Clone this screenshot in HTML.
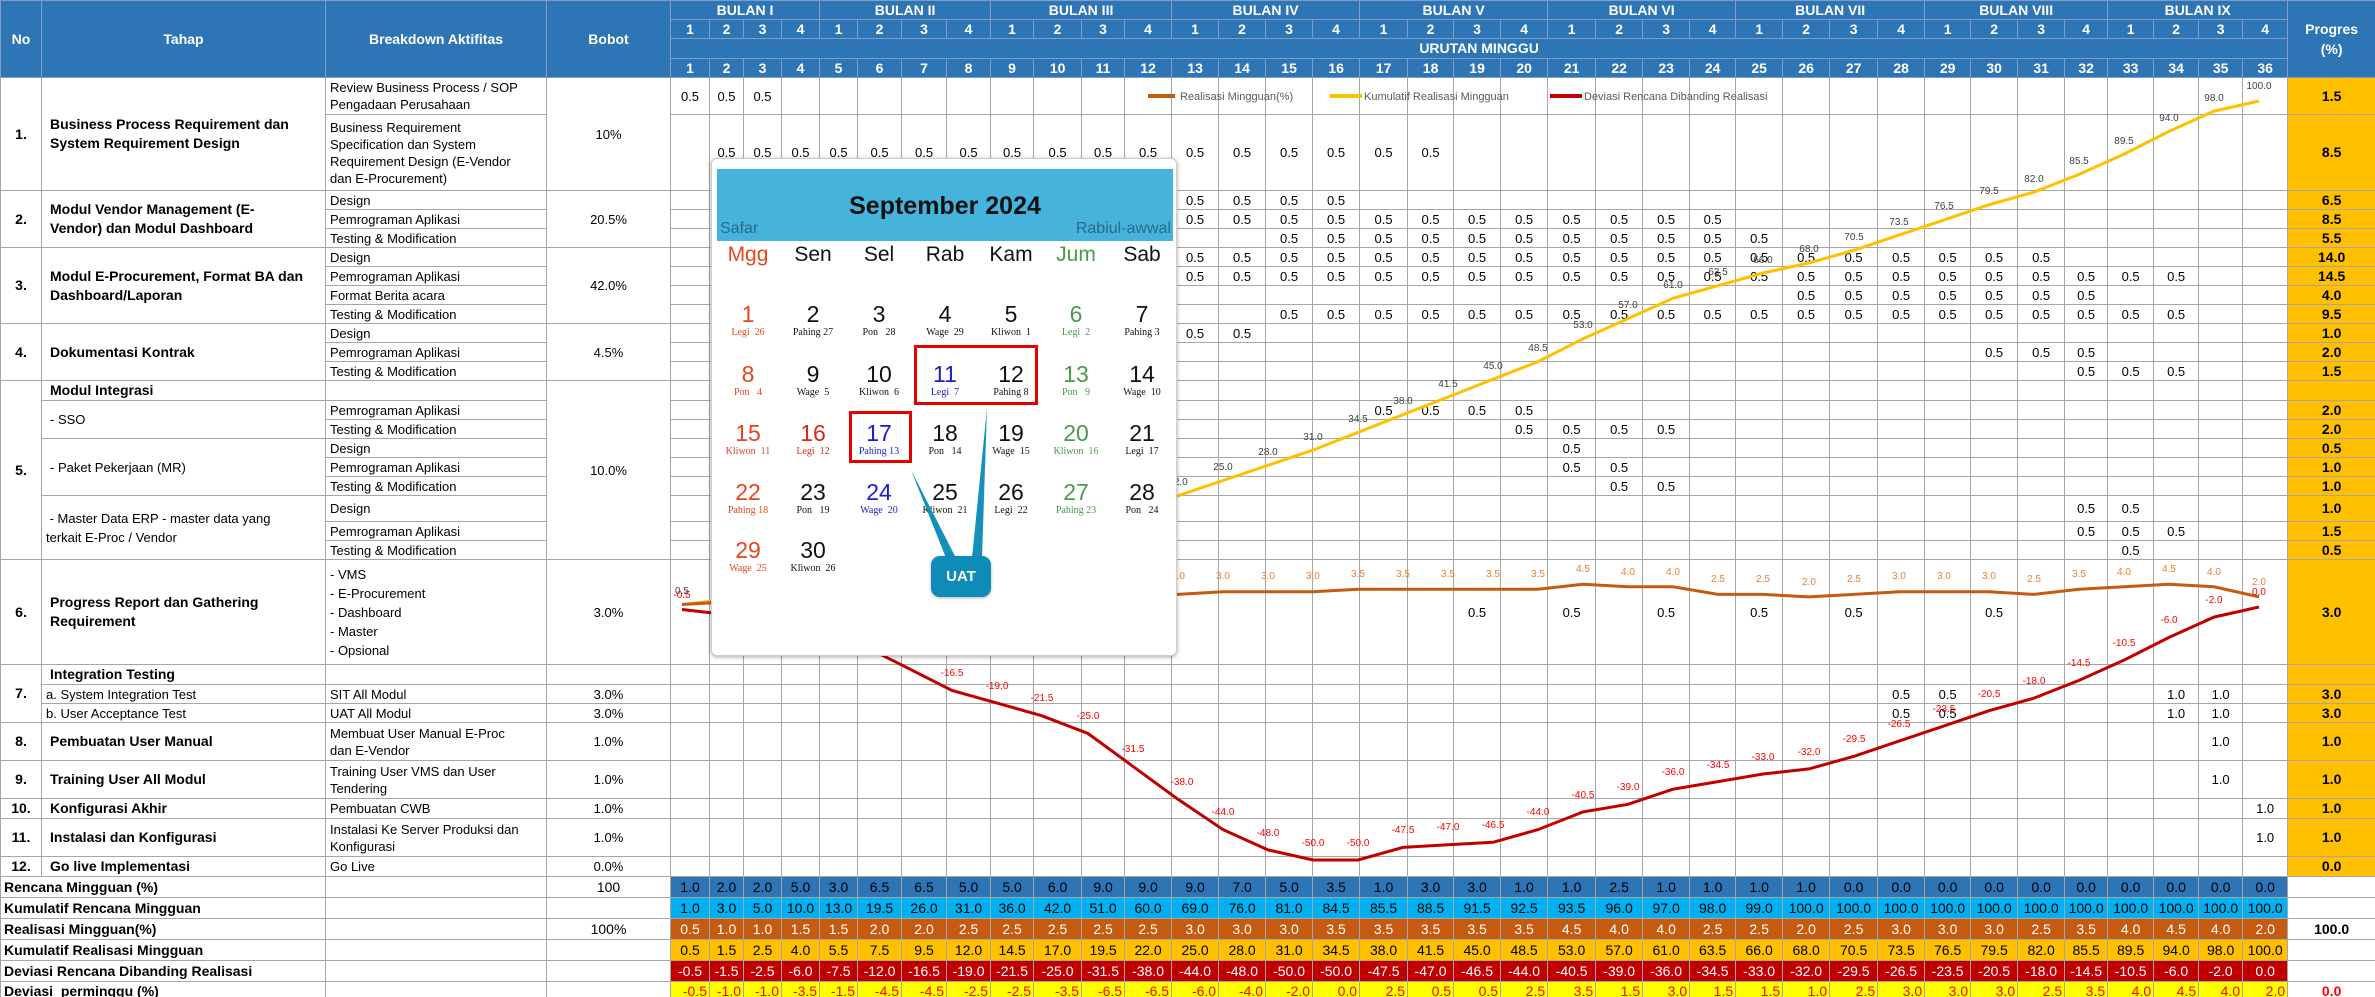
<!DOCTYPE html>
<html><head><meta charset="utf-8">
<style>
*{margin:0;padding:0;box-sizing:border-box}
body{width:2375px;height:997px;overflow:hidden;background:#fff;font-family:"Liberation Sans",sans-serif}
#wrap{position:relative;width:2375px;height:997px;overflow:hidden}
table{border-collapse:collapse;table-layout:fixed;width:2375px;position:absolute;left:0;top:0}
td{border:1px solid #a6a6a6;font-size:13px;text-align:center;white-space:nowrap;overflow:hidden;padding:0 2px;color:#000;line-height:17px}
thead td{background:#2e75b6;color:#fff;font-weight:bold;font-size:14px;border-color:#7f9cc4}
.l{text-align:left;padding-left:4px}
.t{text-align:left;padding-left:8px;font-weight:bold;font-size:14px;line-height:19px}
.n{font-weight:bold;font-size:14px}
.p{background:#ffc000;font-weight:bold;font-size:14px}
.s td{font-size:14px}
.sl{text-align:left;padding-left:3px;font-weight:bold;font-size:14px}
.r1 td.v{background:#2e75b6}
.r2 td.v{background:#00b0f0}
.r3 td.v{background:#c55a11;color:#fff}
.r4 td.v{background:#ffc000}
.r5 td.v{background:#c00000;color:#fff}
.r6 td.v{background:#ffff00;color:#f00;text-align:right}
#chart{position:absolute;left:0;top:0;z-index:2}
#cal{position:absolute;left:711px;top:158px;width:466px;height:498px;background:#fff;border:1px solid #cfcfcf;border-radius:6px;box-shadow:0 1px 4px rgba(0,0,0,.35);z-index:3}
#calh{position:absolute;left:5px;top:10px;width:456px;height:72px;background:#45b3dc}
#calh .ti{position:absolute;left:0;width:456px;top:23px;text-align:center;font-size:25px;font-weight:bold;color:#111}
#calh .sf{position:absolute;left:3px;top:51px;font-size:16px;color:#2a6b8c}
#calh .ra{position:absolute;right:2px;top:51px;font-size:16px;color:#2a6b8c}
.dn{position:absolute;width:66px;text-align:center;top:84px;font-size:21px;color:#111}
.d{position:absolute;width:66px;text-align:center;font-size:23px;color:#111}
.d b{font-weight:normal;display:block;height:26px;line-height:26px}
.d i{font-style:normal;display:block;font-family:"Liberation Serif",serif;font-size:10px;line-height:12px}
.su{color:#e8451e}.gr{color:#4a9a4a}.bl{color:#1a1ad0}.rd{color:#d42a1a}
.box{position:absolute;border:3px solid #e60000}
#ptr{position:absolute;left:0;top:0;z-index:4}
#uat{position:absolute;left:931px;top:556px;width:60px;height:41px;background:#0f8bb8;border-radius:9px;color:#fff;font-weight:bold;font-size:15px;text-align:center;line-height:41px;z-index:5;box-shadow:0 1px 3px rgba(0,0,0,.3)}
</style></head><body><div id="wrap">
<table>
<colgroup><col style="width:41px"><col style="width:284px"><col style="width:221px"><col style="width:124px">
<col style="width:39px"><col style="width:34px"><col style="width:38px"><col style="width:38px">
<col style="width:38px"><col style="width:44px"><col style="width:45px"><col style="width:44px">
<col style="width:43px"><col style="width:48px"><col style="width:43px"><col style="width:47px">
<col style="width:47px"><col style="width:47px"><col style="width:47px"><col style="width:47px">
<col style="width:48px"><col style="width:46px"><col style="width:47px"><col style="width:47px">
<col style="width:48px"><col style="width:47px"><col style="width:47px"><col style="width:46px">
<col style="width:47px"><col style="width:47px"><col style="width:48px"><col style="width:47px">
<col style="width:46px"><col style="width:47px"><col style="width:47px"><col style="width:43px">
<col style="width:46px"><col style="width:45px"><col style="width:44px"><col style="width:45px">
<col style="width:88px"></colgroup>
<thead>
<tr style="height:19px"><td rowspan="4">No</td><td rowspan="4">Tahap</td><td rowspan="4">Breakdown Aktifitas</td><td rowspan="4">Bobot</td>
<td colspan="4">BULAN I</td><td colspan="4">BULAN II</td><td colspan="4">BULAN III</td><td colspan="4">BULAN IV</td><td colspan="4">BULAN V</td><td colspan="4">BULAN VI</td><td colspan="4">BULAN VII</td><td colspan="4">BULAN VIII</td><td colspan="4">BULAN IX</td><td rowspan="4" style="line-height:20px">Progres<br>(%)</td></tr>
<tr style="height:19px"><td>1<td>2<td>3<td>4<td>1<td>2<td>3<td>4<td>1<td>2<td>3<td>4<td>1<td>2<td>3<td>4<td>1<td>2<td>3<td>4<td>1<td>2<td>3<td>4<td>1<td>2<td>3<td>4<td>1<td>2<td>3<td>4<td>1<td>2<td>3<td>4</tr>
<tr style="height:20px"><td colspan="36">URUTAN MINGGU</td></tr>
<tr style="height:19px"><td>1<td>2<td>3<td>4<td>5<td>6<td>7<td>8<td>9<td>10<td>11<td>12<td>13<td>14<td>15<td>16<td>17<td>18<td>19<td>20<td>21<td>22<td>23<td>24<td>25<td>26<td>27<td>28<td>29<td>30<td>31<td>32<td>33<td>34<td>35<td>36</tr>
</thead>
<tbody>
<tr style="height:37px"><td rowspan="2" class="n">1.</td><td rowspan="2" class="t">Business Process Requirement dan<br>System Requirement Design</td><td class="l">Review Business Process / SOP<br>Pengadaan Perusahaan</td><td rowspan="2">10%</td>
<td>0.5<td>0.5<td>0.5<td><td><td><td><td><td><td><td><td><td><td><td><td><td><td><td><td><td><td><td><td><td><td><td><td><td><td><td><td><td><td><td><td><td class="p">1.5</tr>
<tr style="height:76px"><td class="l">Business Requirement<br>Specification dan System<br>Requirement Design (E-Vendor<br>dan E-Procurement)</td>
<td><td>0.5<td>0.5<td>0.5<td>0.5<td>0.5<td>0.5<td>0.5<td>0.5<td>0.5<td>0.5<td>0.5<td>0.5<td>0.5<td>0.5<td>0.5<td>0.5<td>0.5<td><td><td><td><td><td><td><td><td><td><td><td><td><td><td><td><td><td><td class="p">8.5</tr>
<tr style="height:19px"><td rowspan="3" class="n">2.</td><td rowspan="3" class="t">Modul Vendor Management (E-<br>Vendor) dan Modul Dashboard</td><td class="l">Design</td><td rowspan="3">20.5%</td>
<td><td><td><td><td><td><td><td><td><td><td><td><td>0.5<td>0.5<td>0.5<td>0.5<td><td><td><td><td><td><td><td><td><td><td><td><td><td><td><td><td><td><td><td><td class="p">6.5</tr>
<tr style="height:19px"><td class="l">Pemrograman Aplikasi</td>
<td><td><td><td><td><td><td><td><td><td><td><td><td>0.5<td>0.5<td>0.5<td>0.5<td>0.5<td>0.5<td>0.5<td>0.5<td>0.5<td>0.5<td>0.5<td>0.5<td><td><td><td><td><td><td><td><td><td><td><td><td class="p">8.5</tr>
<tr style="height:19px"><td class="l">Testing &amp; Modification</td>
<td><td><td><td><td><td><td><td><td><td><td><td><td><td><td>0.5<td>0.5<td>0.5<td>0.5<td>0.5<td>0.5<td>0.5<td>0.5<td>0.5<td>0.5<td>0.5<td><td><td><td><td><td><td><td><td><td><td><td class="p">5.5</tr>
<tr style="height:19px"><td rowspan="4" class="n">3.</td><td rowspan="4" class="t">Modul E-Procurement, Format BA dan<br>Dashboard/Laporan</td><td class="l">Design</td><td rowspan="4">42.0%</td>
<td><td><td><td><td><td><td><td><td><td><td><td><td>0.5<td>0.5<td>0.5<td>0.5<td>0.5<td>0.5<td>0.5<td>0.5<td>0.5<td>0.5<td>0.5<td>0.5<td>0.5<td>0.5<td>0.5<td>0.5<td>0.5<td>0.5<td>0.5<td><td><td><td><td><td class="p">14.0</tr>
<tr style="height:19px"><td class="l">Pemrograman Aplikasi</td>
<td><td><td><td><td><td><td><td><td><td><td><td><td>0.5<td>0.5<td>0.5<td>0.5<td>0.5<td>0.5<td>0.5<td>0.5<td>0.5<td>0.5<td>0.5<td>0.5<td>0.5<td>0.5<td>0.5<td>0.5<td>0.5<td>0.5<td>0.5<td>0.5<td>0.5<td>0.5<td><td><td class="p">14.5</tr>
<tr style="height:19px"><td class="l">Format Berita acara</td>
<td><td><td><td><td><td><td><td><td><td><td><td><td><td><td><td><td><td><td><td><td><td><td><td><td><td>0.5<td>0.5<td>0.5<td>0.5<td>0.5<td>0.5<td>0.5<td><td><td><td><td class="p">4.0</tr>
<tr style="height:19px"><td class="l">Testing &amp; Modification</td>
<td><td><td><td><td><td><td><td><td><td><td><td><td><td><td>0.5<td>0.5<td>0.5<td>0.5<td>0.5<td>0.5<td>0.5<td>0.5<td>0.5<td>0.5<td>0.5<td>0.5<td>0.5<td>0.5<td>0.5<td>0.5<td>0.5<td>0.5<td>0.5<td>0.5<td><td><td class="p">9.5</tr>
<tr style="height:19px"><td rowspan="3" class="n">4.</td><td rowspan="3" class="t">Dokumentasi Kontrak</td><td class="l">Design</td><td rowspan="3">4.5%</td>
<td><td><td><td><td><td><td><td><td><td><td><td><td>0.5<td>0.5<td><td><td><td><td><td><td><td><td><td><td><td><td><td><td><td><td><td><td><td><td><td><td class="p">1.0</tr>
<tr style="height:19px"><td class="l">Pemrograman Aplikasi</td>
<td><td><td><td><td><td><td><td><td><td><td><td><td><td><td><td><td><td><td><td><td><td><td><td><td><td><td><td><td><td>0.5<td>0.5<td>0.5<td><td><td><td><td class="p">2.0</tr>
<tr style="height:19px"><td class="l">Testing &amp; Modification</td>
<td><td><td><td><td><td><td><td><td><td><td><td><td><td><td><td><td><td><td><td><td><td><td><td><td><td><td><td><td><td><td><td>0.5<td>0.5<td>0.5<td><td><td class="p">1.5</tr>
<tr style="height:19px"><td rowspan="9" class="n">5.</td><td class="t">Modul Integrasi</td><td></td><td rowspan="9">10.0%</td>
<td><td><td><td><td><td><td><td><td><td><td><td><td><td><td><td><td><td><td><td><td><td><td><td><td><td><td><td><td><td><td><td><td><td><td><td><td class="p"></tr>
<tr style="height:19px"><td rowspan="2" class="l" style="padding-left:8px">- SSO</td><td class="l">Pemrograman Aplikasi</td>
<td><td><td><td><td><td><td><td><td><td><td><td><td><td><td><td><td>0.5<td>0.5<td>0.5<td>0.5<td><td><td><td><td><td><td><td><td><td><td><td><td><td><td><td><td class="p">2.0</tr>
<tr style="height:19px"><td class="l">Testing &amp; Modification</td>
<td><td><td><td><td><td><td><td><td><td><td><td><td><td><td><td><td><td><td><td>0.5<td>0.5<td>0.5<td>0.5<td><td><td><td><td><td><td><td><td><td><td><td><td><td class="p">2.0</tr>
<tr style="height:19px"><td rowspan="3" class="l" style="padding-left:8px">- Paket Pekerjaan (MR)</td><td class="l">Design</td>
<td><td><td><td><td><td><td><td><td><td><td><td><td><td><td><td><td><td><td><td><td>0.5<td><td><td><td><td><td><td><td><td><td><td><td><td><td><td><td class="p">0.5</tr>
<tr style="height:19px"><td class="l">Pemrograman Aplikasi</td>
<td><td><td><td><td><td><td><td><td><td><td><td><td><td><td><td><td><td><td><td><td>0.5<td>0.5<td><td><td><td><td><td><td><td><td><td><td><td><td><td><td class="p">1.0</tr>
<tr style="height:19px"><td class="l">Testing &amp; Modification</td>
<td><td><td><td><td><td><td><td><td><td><td><td><td><td><td><td><td><td><td><td><td><td>0.5<td>0.5<td><td><td><td><td><td><td><td><td><td><td><td><td><td class="p">1.0</tr>
<tr style="height:26px"><td rowspan="3" class="l" style="line-height:19px">&nbsp;- Master Data ERP - master data yang<br>terkait E-Proc / Vendor</td><td class="l">Design</td>
<td><td><td><td><td><td><td><td><td><td><td><td><td><td><td><td><td><td><td><td><td><td><td><td><td><td><td><td><td><td><td><td>0.5<td>0.5<td><td><td><td class="p">1.0</tr>
<tr style="height:19px"><td class="l">Pemrograman Aplikasi</td>
<td><td><td><td><td><td><td><td><td><td><td><td><td><td><td><td><td><td><td><td><td><td><td><td><td><td><td><td><td><td><td><td>0.5<td>0.5<td>0.5<td><td><td class="p">1.5</tr>
<tr style="height:19px"><td class="l">Testing &amp; Modification</td>
<td><td><td><td><td><td><td><td><td><td><td><td><td><td><td><td><td><td><td><td><td><td><td><td><td><td><td><td><td><td><td><td><td>0.5<td><td><td><td class="p">0.5</tr>
<tr style="height:105px"><td class="n">6.</td><td class="t">Progress Report dan Gathering<br>Requirement</td><td class="l" style="line-height:19px">- VMS<br>- E-Procurement<br>- Dashboard<br>- Master<br>- Opsional</td><td>3.0%</td>
<td></td><td></td><td></td><td></td><td></td><td></td><td></td><td></td><td></td><td></td><td></td><td></td><td></td><td></td><td></td><td></td>
<td></td><td></td><td>0.5</td><td></td>
<td>0.5</td><td></td><td>0.5</td><td></td>
<td>0.5</td><td></td><td>0.5</td><td></td>
<td></td><td>0.5</td><td></td><td></td>
<td></td><td></td><td></td><td></td>
<td class="p">3.0</td></tr>
<tr style="height:19px"><td rowspan="3" class="n">7.</td><td class="t">Integration Testing</td><td></td><td></td>
<td><td><td><td><td><td><td><td><td><td><td><td><td><td><td><td><td><td><td><td><td><td><td><td><td><td><td><td><td><td><td><td><td><td><td><td><td class="p"></tr>
<tr style="height:19px"><td class="l">a. System Integration Test</td><td class="l">SIT All Modul</td><td>3.0%</td>
<td><td><td><td><td><td><td><td><td><td><td><td><td><td><td><td><td><td><td><td><td><td><td><td><td><td><td><td>0.5<td>0.5<td><td><td><td><td>1.0<td>1.0<td><td class="p">3.0</tr>
<tr style="height:19px"><td class="l">b. User Acceptance Test</td><td class="l">UAT All Modul</td><td>3.0%</td>
<td><td><td><td><td><td><td><td><td><td><td><td><td><td><td><td><td><td><td><td><td><td><td><td><td><td><td><td>0.5<td>0.5<td><td><td><td><td>1.0<td>1.0<td><td class="p">3.0</tr>
<tr style="height:38px"><td class="n">8.</td><td class="t">Pembuatan User Manual</td><td class="l">Membuat User Manual E-Proc<br>dan E-Vendor</td><td>1.0%</td>
<td><td><td><td><td><td><td><td><td><td><td><td><td><td><td><td><td><td><td><td><td><td><td><td><td><td><td><td><td><td><td><td><td><td><td>1.0<td><td class="p">1.0</tr>
<tr style="height:38px"><td class="n">9.</td><td class="t">Training User All Modul</td><td class="l">Training User VMS dan User<br>Tendering</td><td>1.0%</td>
<td><td><td><td><td><td><td><td><td><td><td><td><td><td><td><td><td><td><td><td><td><td><td><td><td><td><td><td><td><td><td><td><td><td><td>1.0<td><td class="p">1.0</tr>
<tr style="height:19px"><td class="n">10.</td><td class="t">Konfigurasi Akhir</td><td class="l">Pembuatan CWB</td><td>1.0%</td>
<td><td><td><td><td><td><td><td><td><td><td><td><td><td><td><td><td><td><td><td><td><td><td><td><td><td><td><td><td><td><td><td><td><td><td><td>1.0<td class="p">1.0</tr>
<tr style="height:38px"><td class="n">11.</td><td class="t">Instalasi dan Konfigurasi</td><td class="l">Instalasi Ke Server Produksi dan<br>Konfigurasi</td><td>1.0%</td>
<td><td><td><td><td><td><td><td><td><td><td><td><td><td><td><td><td><td><td><td><td><td><td><td><td><td><td><td><td><td><td><td><td><td><td><td>1.0<td class="p">1.0</tr>
<tr style="height:19px"><td class="n">12.</td><td class="t">Go live Implementasi</td><td class="l">Go Live</td><td>0.0%</td>
<td><td><td><td><td><td><td><td><td><td><td><td><td><td><td><td><td><td><td><td><td><td><td><td><td><td><td><td><td><td><td><td><td><td><td><td><td class="p">0.0</tr>
<tr class="s r1" style="height:21px"><td colspan="2" class="sl">Rencana Mingguan (%)</td><td></td><td>100</td>
<td class="v">1.0<td class="v">2.0<td class="v">2.0<td class="v">5.0<td class="v">3.0<td class="v">6.5<td class="v">6.5<td class="v">5.0<td class="v">5.0<td class="v">6.0<td class="v">9.0<td class="v">9.0<td class="v">9.0<td class="v">7.0<td class="v">5.0<td class="v">3.5<td class="v">1.0<td class="v">3.0<td class="v">3.0<td class="v">1.0<td class="v">1.0<td class="v">2.5<td class="v">1.0<td class="v">1.0<td class="v">1.0<td class="v">1.0<td class="v">0.0<td class="v">0.0<td class="v">0.0<td class="v">0.0<td class="v">0.0<td class="v">0.0<td class="v">0.0<td class="v">0.0<td class="v">0.0<td class="v">0.0<td></tr>
<tr class="s r2" style="height:21px"><td colspan="2" class="sl">Kumulatif Rencana Mingguan</td><td></td><td></td>
<td class="v">1.0<td class="v">3.0<td class="v">5.0<td class="v">10.0<td class="v">13.0<td class="v">19.5<td class="v">26.0<td class="v">31.0<td class="v">36.0<td class="v">42.0<td class="v">51.0<td class="v">60.0<td class="v">69.0<td class="v">76.0<td class="v">81.0<td class="v">84.5<td class="v">85.5<td class="v">88.5<td class="v">91.5<td class="v">92.5<td class="v">93.5<td class="v">96.0<td class="v">97.0<td class="v">98.0<td class="v">99.0<td class="v">100.0<td class="v">100.0<td class="v">100.0<td class="v">100.0<td class="v">100.0<td class="v">100.0<td class="v">100.0<td class="v">100.0<td class="v">100.0<td class="v">100.0<td class="v">100.0<td></tr>
<tr class="s r3" style="height:21px"><td colspan="2" class="sl">Realisasi Mingguan(%)</td><td></td><td>100%</td>
<td class="v">0.5<td class="v">1.0<td class="v">1.0<td class="v">1.5<td class="v">1.5<td class="v">2.0<td class="v">2.0<td class="v">2.5<td class="v">2.5<td class="v">2.5<td class="v">2.5<td class="v">2.5<td class="v">3.0<td class="v">3.0<td class="v">3.0<td class="v">3.5<td class="v">3.5<td class="v">3.5<td class="v">3.5<td class="v">3.5<td class="v">4.5<td class="v">4.0<td class="v">4.0<td class="v">2.5<td class="v">2.5<td class="v">2.0<td class="v">2.5<td class="v">3.0<td class="v">3.0<td class="v">3.0<td class="v">2.5<td class="v">3.5<td class="v">4.0<td class="v">4.5<td class="v">4.0<td class="v">2.0<td style="font-weight:bold">100.0</tr>
<tr class="s r4" style="height:21px"><td colspan="2" class="sl">Kumulatif Realisasi Mingguan</td><td></td><td></td>
<td class="v">0.5<td class="v">1.5<td class="v">2.5<td class="v">4.0<td class="v">5.5<td class="v">7.5<td class="v">9.5<td class="v">12.0<td class="v">14.5<td class="v">17.0<td class="v">19.5<td class="v">22.0<td class="v">25.0<td class="v">28.0<td class="v">31.0<td class="v">34.5<td class="v">38.0<td class="v">41.5<td class="v">45.0<td class="v">48.5<td class="v">53.0<td class="v">57.0<td class="v">61.0<td class="v">63.5<td class="v">66.0<td class="v">68.0<td class="v">70.5<td class="v">73.5<td class="v">76.5<td class="v">79.5<td class="v">82.0<td class="v">85.5<td class="v">89.5<td class="v">94.0<td class="v">98.0<td class="v">100.0<td></tr>
<tr class="s r5" style="height:21px"><td colspan="2" class="sl">Deviasi Rencana Dibanding Realisasi</td><td></td><td></td>
<td class="v">-0.5<td class="v">-1.5<td class="v">-2.5<td class="v">-6.0<td class="v">-7.5<td class="v">-12.0<td class="v">-16.5<td class="v">-19.0<td class="v">-21.5<td class="v">-25.0<td class="v">-31.5<td class="v">-38.0<td class="v">-44.0<td class="v">-48.0<td class="v">-50.0<td class="v">-50.0<td class="v">-47.5<td class="v">-47.0<td class="v">-46.5<td class="v">-44.0<td class="v">-40.5<td class="v">-39.0<td class="v">-36.0<td class="v">-34.5<td class="v">-33.0<td class="v">-32.0<td class="v">-29.5<td class="v">-26.5<td class="v">-23.5<td class="v">-20.5<td class="v">-18.0<td class="v">-14.5<td class="v">-10.5<td class="v">-6.0<td class="v">-2.0<td class="v">0.0<td></tr>
<tr class="s r6" style="height:20px"><td colspan="2" class="sl">Deviasi&nbsp; perminggu (%)</td><td></td><td></td>
<td class="v">-0.5<td class="v">-1.0<td class="v">-1.0<td class="v">-3.5<td class="v">-1.5<td class="v">-4.5<td class="v">-4.5<td class="v">-2.5<td class="v">-2.5<td class="v">-3.5<td class="v">-6.5<td class="v">-6.5<td class="v">-6.0<td class="v">-4.0<td class="v">-2.0<td class="v">0.0<td class="v">2.5<td class="v">0.5<td class="v">0.5<td class="v">2.5<td class="v">3.5<td class="v">1.5<td class="v">3.0<td class="v">1.5<td class="v">1.5<td class="v">1.0<td class="v">2.5<td class="v">3.0<td class="v">3.0<td class="v">3.0<td class="v">2.5<td class="v">3.5<td class="v">4.0<td class="v">4.5<td class="v">4.0<td class="v">2.0<td style="color:#f00;font-weight:bold">0.0</tr>
</tbody></table>

<svg id="chart" width="2375" height="997" viewBox="0 0 2375 997" font-family="Liberation Sans, sans-serif" font-size="10">
<g font-size="11" fill="#595959">
<line x1="1148" y1="96" x2="1175" y2="96" stroke="#c55a11" stroke-width="4"/><text x="1180" y="100">Realisasi Mingguan(%)</text>
<line x1="1330" y1="96" x2="1362" y2="96" stroke="#ffc000" stroke-width="4"/><text x="1364" y="100">Kumulatif Realisasi Mingguan</text>
<line x1="1550" y1="96" x2="1582" y2="96" stroke="#c00000" stroke-width="4"/><text x="1584" y="100">Deviasi Rencana Dibanding Realisasi</text>
</g>
<polyline fill="none" stroke="#ffc000" stroke-width="3" points="682,604.5 727,599.4 772,594.4 817,586.8 862,579.2 907,569.1 952,558.9 997,546.3 1042,533.6 1088,521 1133,508.3 1178,495.7 1223,480.5 1268,465.3 1313,450.1 1358,432.4 1403,414.7 1448,397 1493,379.3 1538,361.6 1583,338.8 1628,318.6 1673,298.3 1718,285.7 1763,273 1809,262.9 1854,250.3 1899,235.1 1944,219.9 1989,204.7 2034,192.1 2079,174.4 2124,154.1 2169,131.4 2214,111.1 2259,101"/>
<polyline fill="none" stroke="#c55a11" stroke-width="3" points="682,604.5 727,601.9 772,601.9 817,599.4 862,599.4 907,596.9 952,596.9 997,594.4 1042,594.4 1088,594.4 1133,594.4 1178,594.4 1223,591.8 1268,591.8 1313,591.8 1358,589.3 1403,589.3 1448,589.3 1493,589.3 1538,589.3 1583,584.2 1628,586.8 1673,586.8 1718,594.4 1763,594.4 1809,596.9 1854,594.4 1899,591.8 1944,591.8 1989,591.8 2034,594.4 2079,589.3 2124,586.8 2169,584.2 2214,586.8 2259,596.9"/>
<polyline fill="none" stroke="#c00000" stroke-width="3" points="682,609.5 727,614.6 772,619.7 817,637.4 862,645 907,667.7 952,690.5 997,703.1 1042,715.8 1088,733.5 1133,766.4 1178,799.3 1223,829.6 1268,849.9 1313,860 1358,860 1403,847.4 1448,844.8 1493,842.3 1538,829.6 1583,811.9 1628,804.3 1673,789.2 1718,781.6 1763,774 1809,768.9 1854,756.3 1899,741.1 1944,725.9 1989,710.7 2034,698.1 2079,680.4 2124,660.1 2169,637.4 2214,617.1 2259,607"/>
<g fill="#404040" text-anchor="middle">
<text x="682" y="594">0.5</text><text x="1178" y="485">22.0</text><text x="1223" y="470">25.0</text><text x="1268" y="455">28.0</text><text x="1313" y="440">31.0</text><text x="1358" y="422">34.5</text><text x="1403" y="404">38.0</text><text x="1448" y="387">41.5</text><text x="1493" y="369">45.0</text><text x="1538" y="351">48.5</text><text x="1583" y="328">53.0</text><text x="1628" y="308">57.0</text><text x="1673" y="288">61.0</text><text x="1718" y="275">63.5</text><text x="1763" y="263">66.0</text><text x="1809" y="252">68.0</text><text x="1854" y="240">70.5</text><text x="1899" y="225">73.5</text><text x="1944" y="209">76.5</text><text x="1989" y="194">79.5</text><text x="2034" y="182">82.0</text><text x="2079" y="164">85.5</text><text x="2124" y="144">89.5</text><text x="2169" y="121">94.0</text><text x="2214" y="101">98.0</text><text x="2259" y="89">100.0</text>
</g>
<g fill="#ed7d31" text-anchor="middle">
<text x="1178" y="579">3.0</text><text x="1223" y="579">3.0</text><text x="1268" y="579">3.0</text><text x="1313" y="579">3.0</text><text x="1358" y="577">3.5</text><text x="1403" y="577">3.5</text><text x="1448" y="577">3.5</text><text x="1493" y="577">3.5</text><text x="1538" y="577">3.5</text><text x="1583" y="572">4.5</text><text x="1628" y="575">4.0</text><text x="1673" y="575">4.0</text><text x="1718" y="582">2.5</text><text x="1763" y="582">2.5</text><text x="1809" y="585">2.0</text><text x="1854" y="582">2.5</text><text x="1899" y="579">3.0</text><text x="1944" y="579">3.0</text><text x="1989" y="579">3.0</text><text x="2034" y="582">2.5</text><text x="2079" y="577">3.5</text><text x="2124" y="575">4.0</text><text x="2169" y="572">4.5</text><text x="2214" y="575">4.0</text><text x="2259" y="585">2.0</text>
</g>
<g fill="#ff0000" text-anchor="middle">
<text x="682" y="598">-0.5</text><text x="952" y="676">-16.5</text><text x="997" y="689">-19.0</text><text x="1042" y="701">-21.5</text><text x="1088" y="719">-25.0</text><text x="1133" y="752">-31.5</text><text x="1182" y="785">-38.0</text><text x="1223" y="815">-44.0</text><text x="1268" y="836">-48.0</text><text x="1313" y="846">-50.0</text><text x="1358" y="846">-50.0</text><text x="1403" y="833">-47.5</text><text x="1448" y="830">-47.0</text><text x="1493" y="828">-46.5</text><text x="1538" y="815">-44.0</text><text x="1583" y="798">-40.5</text><text x="1628" y="790">-39.0</text><text x="1673" y="775">-36.0</text><text x="1718" y="768">-34.5</text><text x="1763" y="760">-33.0</text><text x="1809" y="755">-32.0</text><text x="1854" y="742">-29.5</text><text x="1899" y="727">-26.5</text><text x="1944" y="712">-23.5</text><text x="1989" y="697">-20.5</text><text x="2034" y="684">-18.0</text><text x="2079" y="666">-14.5</text><text x="2124" y="646">-10.5</text><text x="2169" y="623">-6.0</text><text x="2214" y="603">-2.0</text><text x="2259" y="595">0.0</text>
</g>
</svg>

<div id="cal">
<div id="calh"><div class="ti">September 2024</div><div class="sf">Safar</div><div class="ra">Rabiul-awwal</div></div>
<div class="dn su" style="left:3px">Mgg</div><div class="dn" style="left:68px">Sen</div><div class="dn" style="left:134px">Sel</div><div class="dn" style="left:200px">Rab</div><div class="dn" style="left:266px">Kam</div><div class="dn gr" style="left:331px">Jum</div><div class="dn" style="left:397px">Sab</div>

<div class="d su" style="left:3px;top:142px"><b>1</b><i>Legi&nbsp; 26</i></div>
<div class="d" style="left:68px;top:142px"><b>2</b><i>Pahing 27</i></div>
<div class="d" style="left:134px;top:142px"><b>3</b><i>Pon&nbsp;&nbsp; 28</i></div>
<div class="d" style="left:200px;top:142px"><b>4</b><i>Wage&nbsp; 29</i></div>
<div class="d" style="left:266px;top:142px"><b>5</b><i>Kliwon&nbsp; 1</i></div>
<div class="d gr" style="left:331px;top:142px"><b>6</b><i>Legi&nbsp; 2</i></div>
<div class="d" style="left:397px;top:142px"><b>7</b><i>Pahing 3</i></div>

<div class="d su" style="left:3px;top:202px"><b>8</b><i>Pon&nbsp;&nbsp; 4</i></div>
<div class="d" style="left:68px;top:202px"><b>9</b><i>Wage&nbsp; 5</i></div>
<div class="d" style="left:134px;top:202px"><b>10</b><i>Kliwon&nbsp; 6</i></div>
<div class="d bl" style="left:200px;top:202px"><b>11</b><i>Legi&nbsp; 7</i></div>
<div class="d" style="left:266px;top:202px"><b>12</b><i>Pahing 8</i></div>
<div class="d gr" style="left:331px;top:202px"><b>13</b><i>Pon&nbsp;&nbsp; 9</i></div>
<div class="d" style="left:397px;top:202px"><b>14</b><i>Wage&nbsp; 10</i></div>

<div class="d su" style="left:3px;top:261px"><b>15</b><i>Kliwon&nbsp; 11</i></div>
<div class="d rd" style="left:68px;top:261px"><b>16</b><i>Legi&nbsp; 12</i></div>
<div class="d bl" style="left:134px;top:261px"><b>17</b><i>Pahing 13</i></div>
<div class="d" style="left:200px;top:261px"><b>18</b><i>Pon&nbsp;&nbsp; 14</i></div>
<div class="d" style="left:266px;top:261px"><b>19</b><i>Wage&nbsp; 15</i></div>
<div class="d gr" style="left:331px;top:261px"><b>20</b><i>Kliwon&nbsp; 16</i></div>
<div class="d" style="left:397px;top:261px"><b>21</b><i>Legi&nbsp; 17</i></div>

<div class="d su" style="left:3px;top:320px"><b>22</b><i>Pahing 18</i></div>
<div class="d" style="left:68px;top:320px"><b>23</b><i>Pon&nbsp;&nbsp; 19</i></div>
<div class="d bl" style="left:134px;top:320px"><b>24</b><i>Wage&nbsp; 20</i></div>
<div class="d" style="left:200px;top:320px"><b>25</b><i>Kliwon&nbsp; 21</i></div>
<div class="d" style="left:266px;top:320px"><b>26</b><i>Legi&nbsp; 22</i></div>
<div class="d gr" style="left:331px;top:320px"><b>27</b><i>Pahing 23</i></div>
<div class="d" style="left:397px;top:320px"><b>28</b><i>Pon&nbsp;&nbsp; 24</i></div>

<div class="d su" style="left:3px;top:378px"><b>29</b><i>Wage&nbsp; 25</i></div>
<div class="d" style="left:68px;top:378px"><b>30</b><i>Kliwon&nbsp; 26</i></div>

<div class="box" style="left:202px;top:186px;width:124px;height:60px"></div>
<div class="box" style="left:137px;top:252px;width:63px;height:52px"></div>
</div>

<svg id="ptr" width="2375" height="997">
<polygon points="911,470 946,558 956,558" fill="#1590bb"/>
<polygon points="987,408 972,558 982,558" fill="#1590bb"/>
</svg>
<div id="uat">UAT</div>
</div></body></html>
